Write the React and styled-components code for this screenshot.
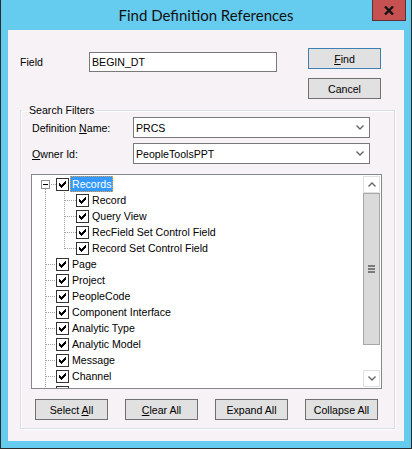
import React from "react";
import styled, { createGlobalStyle } from "styled-components";

const GlobalStyle = createGlobalStyle`
  html, body {
    margin: 0;
    padding: 0;
    background: #ffffff;
  }
  body {
    font-family: "Liberation Sans", Arial, sans-serif;
    font-size: 10.6px;
    color: #000000;
  }
`;

const Frame = styled.div`
  width: 412px;
  height: 449px;
  box-sizing: border-box;
  background: #66ccef;
  border: 1px solid #2b2b2b;
  border-top: 0;
  display: flex;
  flex-direction: column;
`;

const TitleBar = styled.div`
  height: 30px;
  display: grid;
  grid-template-columns: 1fr auto 1fr;
  align-items: start;
`;

const Title = styled.div`
  grid-column: 2;
  margin-top: 5px;
  font-family: Lato, "Noto Sans", sans-serif;
  font-size: 15px;
  line-height: 20px;
  color: #111111;
`;

const CloseButton = styled.div`
  grid-column: 3;
  justify-self: end;
  margin-right: 5px;
  width: 34px;
  height: 21px;
  box-sizing: border-box;
  background: #c75050;
  border: 1px solid #5a3232;
  border-top: 0;
  display: flex;
  align-items: center;
  justify-content: center;
`;

const Client = styled.div`
  flex: 1;
  margin: 0 7px 7px;
  background: #f6f2f6;
  padding: 18px 0 0 12px;
  display: flex;
  flex-direction: column;
`;

const TopRow = styled.div`
  display: flex;
  align-items: flex-start;
`;

const FieldGroup = styled.div`
  display: flex;
  align-items: center;
  margin-top: 4px;
`;

const Label = styled.div`
  width: ${(p) => p.$w}px;
  padding-left: ${(p) => p.$pad || 0}px;
  box-sizing: border-box;
  white-space: nowrap;
`;

const TextBox = styled.div`
  width: 188px;
  height: 20px;
  box-sizing: border-box;
  border: 1px solid #7a7a7a;
  background: #ffffff;
  padding-left: 2px;
  display: flex;
  align-items: center;
`;

const ButtonColumn = styled.div`
  margin-left: 31px;
  display: flex;
  flex-direction: column;
  gap: 9px;
`;

const Button = styled.div`
  width: 73px;
  height: 21px;
  box-sizing: border-box;
  background: #e1e1e1;
  border: 1px solid ${(p) => (p.$default ? "#3c7fb1" : "#707070")};
  display: flex;
  align-items: center;
  justify-content: center;
  white-space: nowrap;
`;

const GroupBox = styled.fieldset`
  margin: 5px 0 0 0;
  width: 375px;
  box-sizing: border-box;
  padding: 0 12px 8px 10px;
  border: 1px solid #d5dfe5;
  box-shadow: inset 1px 1px 0 #ffffff, 1px 1px 0 #ffffff;
  min-inline-size: 0;
  display: flex;
  flex-direction: column;
`;

const Legend = styled.legend`
  margin-left: -9px;
  padding: 0 2px 0 7px;
  line-height: 13px;
`;

const FilterRow = styled.div`
  display: flex;
  align-items: center;
  margin-bottom: ${(p) => p.$gap}px;
`;

const Combo = styled.div`
  width: 237px;
  height: 21px;
  box-sizing: border-box;
  border: 1px solid #7a7a7a;
  background: #ffffff;
  padding: 0 5px 0 2px;
  display: flex;
  align-items: center;
  justify-content: space-between;
`;

const TreeBox = styled.div`
  width: 351px;
  height: 215px;
  box-sizing: border-box;
  border: 1px solid #828790;
  background: #ffffff;
  display: flex;
  overflow: hidden;
`;

const TreeList = styled.div`
  flex: 1;
  padding-top: 1px;
  overflow: hidden;
`;

const TreeRow = styled.div`
  height: 16px;
  display: flex;
  align-items: center;
`;

const Check = styled.svg`
  flex: none;
  display: block;
`;

const ItemText = styled.div`
  margin-left: 1px;
  padding: 0 2px;
  height: 16px;
  line-height: 16px;
  box-sizing: border-box;
  white-space: nowrap;
  background: ${(p) => (p.$selected ? "#3399ff" : "transparent")};
  color: ${(p) => (p.$selected ? "#ffffff" : "#000000")};
  outline: ${(p) => (p.$selected ? "1px dotted #f0a040" : "none")};
  outline-offset: -1px;
`;

const ScrollBar = styled.div`
  width: 17px;
  margin: 1px;
  display: flex;
  flex-direction: column;
`;

const ArrowButton = styled.div`
  height: 17px;
  box-sizing: border-box;
  border: 1px solid #e0e0e0;
  background: #ffffff;
  display: flex;
  align-items: center;
  justify-content: center;
`;

const Thumb = styled.div`
  height: 152px;
  box-sizing: border-box;
  border: 1px solid #a8a8a8;
  background: #dadada;
  display: flex;
  flex-direction: column;
  align-items: center;
  justify-content: center;
  gap: 1px;
`;

const Grip = styled.div`
  width: 7px;
  height: 2px;
  background: #7a7a7a;
`;

const Track = styled.div`
  flex: 1;
`;

const ButtonRow = styled.div`
  margin-top: 10px;
  padding-left: 4px;
  display: flex;
  gap: 17px;
`;

const treeItems = [
  { id: "records", label: "Records", level: 0, expander: true, selected: true },
  { id: "record", label: "Record", level: 1 },
  { id: "query", label: "Query View", level: 1 },
  { id: "recfield", label: "RecField Set Control Field", level: 1 },
  { id: "recset", label: "Record Set Control Field", level: 1, lastChild: true },
  { id: "page", label: "Page", level: 0 },
  { id: "project", label: "Project", level: 0 },
  { id: "peoplecode", label: "PeopleCode", level: 0 },
  { id: "ci", label: "Component Interface", level: 0 },
  { id: "atype", label: "Analytic Type", level: 0 },
  { id: "amodel", label: "Analytic Model", level: 0 },
  { id: "message", label: "Message", level: 0 },
  { id: "channel", label: "Channel", level: 0 },
  { id: "next", label: "", level: 0 },
];

const dot = { stroke: "#a0a0a0", strokeWidth: 1, strokeDasharray: "1 1" };

function Guides({ item }) {
  const w = 24 + 20 * item.level;
  return (
    <svg width={w} height="16" style={{ flex: "none", display: "block" }}>
      {item.level === 0 && item.expander && (
        <>
          <line x1="13.5" y1="13" x2="13.5" y2="16" {...dot} />
          <line x1="19" y1="8.5" x2="24" y2="8.5" {...dot} />
          <rect x="9.5" y="4.5" width="8" height="8" fill="#ffffff" stroke="#919191" />
          <line x1="11" y1="8.5" x2="16" y2="8.5" stroke="#000000" />
        </>
      )}
      {item.level === 0 && !item.expander && (
        <>
          <line x1="13.5" y1="0" x2="13.5" y2="16" {...dot} />
          <line x1="14" y1="8.5" x2="24" y2="8.5" {...dot} />
        </>
      )}
      {item.level === 1 && (
        <>
          <line x1="13.5" y1="0" x2="13.5" y2="16" {...dot} />
          <line x1="32.5" y1="0" x2="32.5" y2={item.lastChild ? 9 : 16} {...dot} />
          <line x1="33" y1="8.5" x2="44" y2="8.5" {...dot} />
        </>
      )}
    </svg>
  );
}

function CheckBox() {
  const cols = [5, 6, 7, 6, 5, 4, 3];
  return (
    <Check width="13" height="13" viewBox="0 0 13 13">
      <rect x="0.5" y="0.5" width="12" height="12" fill="#ffffff" stroke="#333333" />
      {cols.map((y, i) => (
        <rect key={i} x={3 + i} y={y} width="1" height="3" fill="#000000" />
      ))}
    </Check>
  );
}

function Chevron({ up }) {
  return (
    <svg width="8" height="5" viewBox="0 0 8 5" style={{ display: "block" }}>
      <path
        d={up ? "M0.5 4.5 L4 1 L7.5 4.5" : "M0.5 0.5 L4 4 L7.5 0.5"}
        fill="none"
        stroke="#666666"
        strokeWidth="1.4"
      />
    </svg>
  );
}

export default function App() {
  return (
    <>
      <GlobalStyle />
      <Frame>
        <TitleBar>
          <Title>Find Definition References</Title>
          <CloseButton>
            <svg width="10" height="9" viewBox="0 0 10 9">
              <path d="M1 0.5 L9 8.5 M9 0.5 L1 8.5" stroke="#141414" strokeWidth="2.4" />
            </svg>
          </CloseButton>
        </TitleBar>
        <Client>
          <TopRow>
            <FieldGroup>
              <Label $w={69}>Field</Label>
              <TextBox>BEGIN_DT</TextBox>
            </FieldGroup>
            <ButtonColumn>
              <Button $default>
                <span>
                  <u>F</u>ind
                </span>
              </Button>
              <Button>Cancel</Button>
            </ButtonColumn>
          </TopRow>
          <GroupBox>
            <Legend>Search Filters</Legend>
            <FilterRow $gap={5}>
              <Label $w={102} $pad={1}>
                Definition <u>N</u>ame:
              </Label>
              <Combo>
                <span>PRCS</span>
                <Chevron />
              </Combo>
            </FilterRow>
            <FilterRow $gap={10}>
              <Label $w={102} $pad={1}>
                <u>O</u>wner Id:
              </Label>
              <Combo>
                <span>PeopleToolsPPT</span>
                <Chevron />
              </Combo>
            </FilterRow>
            <TreeBox>
              <TreeList>
                {treeItems.map((item) => (
                  <TreeRow key={item.id}>
                    <Guides item={item} />
                    <CheckBox />
                    {item.label && (
                      <ItemText $selected={item.selected}>{item.label}</ItemText>
                    )}
                  </TreeRow>
                ))}
              </TreeList>
              <ScrollBar>
                <ArrowButton>
                  <Chevron up />
                </ArrowButton>
                <Thumb>
                  <Grip />
                  <Grip />
                  <Grip />
                </Thumb>
                <Track />
                <ArrowButton>
                  <Chevron />
                </ArrowButton>
              </ScrollBar>
            </TreeBox>
            <ButtonRow>
              <Button>
                <span>
                  Select <u>A</u>ll
                </span>
              </Button>
              <Button>
                <span>
                  <u>C</u>lear All
                </span>
              </Button>
              <Button>Expand All</Button>
              <Button>Collapse All</Button>
            </ButtonRow>
          </GroupBox>
        </Client>
      </Frame>
    </>
  );
}
